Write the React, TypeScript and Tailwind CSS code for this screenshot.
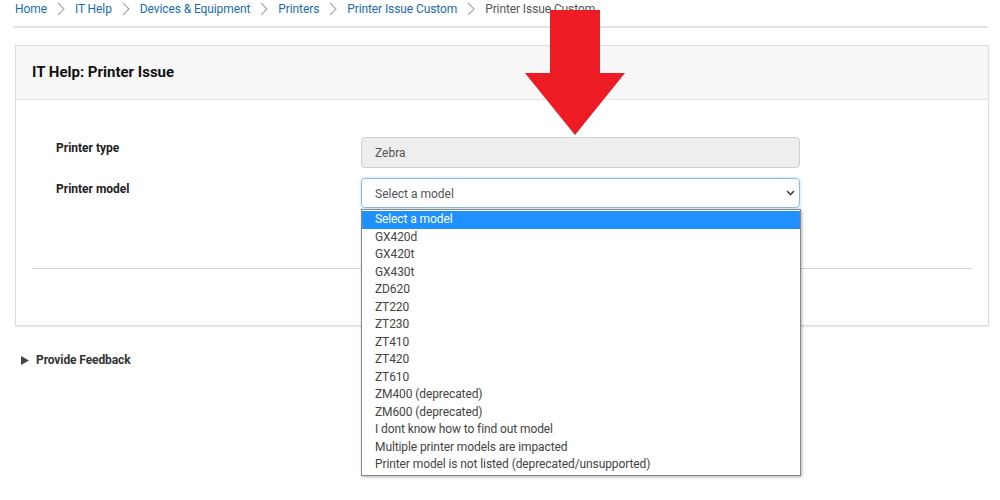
import React from "react";

const crumbs = ["Home", "IT Help", "Devices & Equipment", "Printers", "Printer Issue Custom"];

const models = [
  "Select a model",
  "GX420d",
  "GX420t",
  "GX430t",
  "ZD620",
  "ZT220",
  "ZT230",
  "ZT410",
  "ZT420",
  "ZT610",
  "ZM400 (deprecated)",
  "ZM600 (deprecated)",
  "I dont know how to find out model",
  "Multiple printer models are impacted",
  "Printer model is not listed (deprecated/unsupported)",
];

function Chevron() {
  return (
    <svg width="8" height="14" viewBox="0 0 8 14" className="mx-[10px] shrink-0">
      <path d="M1 1 L7 7 L1 13" fill="none" stroke="#a8a8a8" strokeWidth="1.1" />
    </svg>
  );
}

export default function App() {
  return (
    <div className="relative h-[500px] w-[1000px] overflow-hidden bg-white font-['Roboto',sans-serif] text-[#333]">
      <nav className="flex h-[17px] items-center pl-[15px] text-[12px] leading-none tracking-[-0.1px]">
        {crumbs.map((c) => (
          <React.Fragment key={c}>
            <a className="text-[#1a6bb0]">{c}</a>
            <Chevron />
          </React.Fragment>
        ))}
        <span className="text-[#555]">Printer Issue Custom</span>
      </nav>
      <div className="ml-[13px] mt-[9px] h-[2px] w-[975px] bg-[#e2e2e2]" />

      <section className="ml-[15px] mt-[17px] h-[281px] w-[974px] border border-[#dcdcdc] shadow-[0_1px_1px_rgba(0,0,0,0.08)]">
        <header className="flex h-[54px] items-center border-b border-[#e3e3e3] bg-[#f7f7f7] pl-[16px]">
          <h1 className="text-[15px] font-bold text-[#111]">IT Help: Printer Issue</h1>
        </header>
        <div className="px-[16px] pt-[37px]">
          <div className="flex items-start">
            <div className="w-[329px] pl-[24px] pt-[2px] text-[12px] font-bold text-[#222]">Printer type</div>
            <div className="flex h-[31px] w-[439px] items-center rounded-[4px] border border-[#cfcfcf] bg-[#eeeeee] px-[13px] text-[12px] text-[#555]">
              Zebra
            </div>
          </div>
          <div className="mt-[10px] flex items-start">
            <div className="w-[329px] pl-[24px] pt-[2px] text-[12px] font-bold text-[#222]">Printer model</div>
            <div className="relative w-[439px]">
              <div className="flex h-[30px] items-center justify-between rounded-[4px] border border-[#8cb8ee] pl-[13px] pr-[4px] text-[12px] text-[#555] shadow-[0_0_3px_rgba(102,175,233,0.5)]">
                <span className="mt-px">Select a model</span>
                <svg width="9" height="6" viewBox="0 0 9 6">
                  <path d="M1 1 L4.5 4.5 L8 1" fill="none" stroke="#444" strokeWidth="1.6" />
                </svg>
              </div>
            </div>
          </div>
          <div className="mt-[60px] h-px bg-[#d6d6d6]" />
        </div>
      </section>

      <div className="mt-[25px] flex items-center pl-[21px] text-[12px] font-bold tracking-[-0.1px] text-[#333]">
        <svg width="8" height="9" viewBox="0 0 8 9" className="mr-[7px]">
          <path d="M0 0 L8 4.5 L0 9 Z" fill="#444" />
        </svg>
        Provide Feedback
      </div>

      <ul className="absolute left-[361px] top-[209px] w-[440px] border border-[#888] bg-white py-px text-[12px] leading-[17.5px] tracking-[-0.1px] text-[#444] shadow-[1px_1px_3px_rgba(0,0,0,0.3)]">
        {models.map((m, i) => (
          <li key={m} className={i === 0 ? "bg-[#1e90ff] pl-[13px] text-white" : "pl-[13px]"}>
            {m}
          </li>
        ))}
      </ul>

      <svg className="absolute left-[525px] top-[10px]" width="100" height="126" viewBox="0 0 100 126">
        <path d="M25 0 H75 V63 H100 L50 125 L0 63 H25 Z" fill="#ed1c24" />
      </svg>
    </div>
  );
}
